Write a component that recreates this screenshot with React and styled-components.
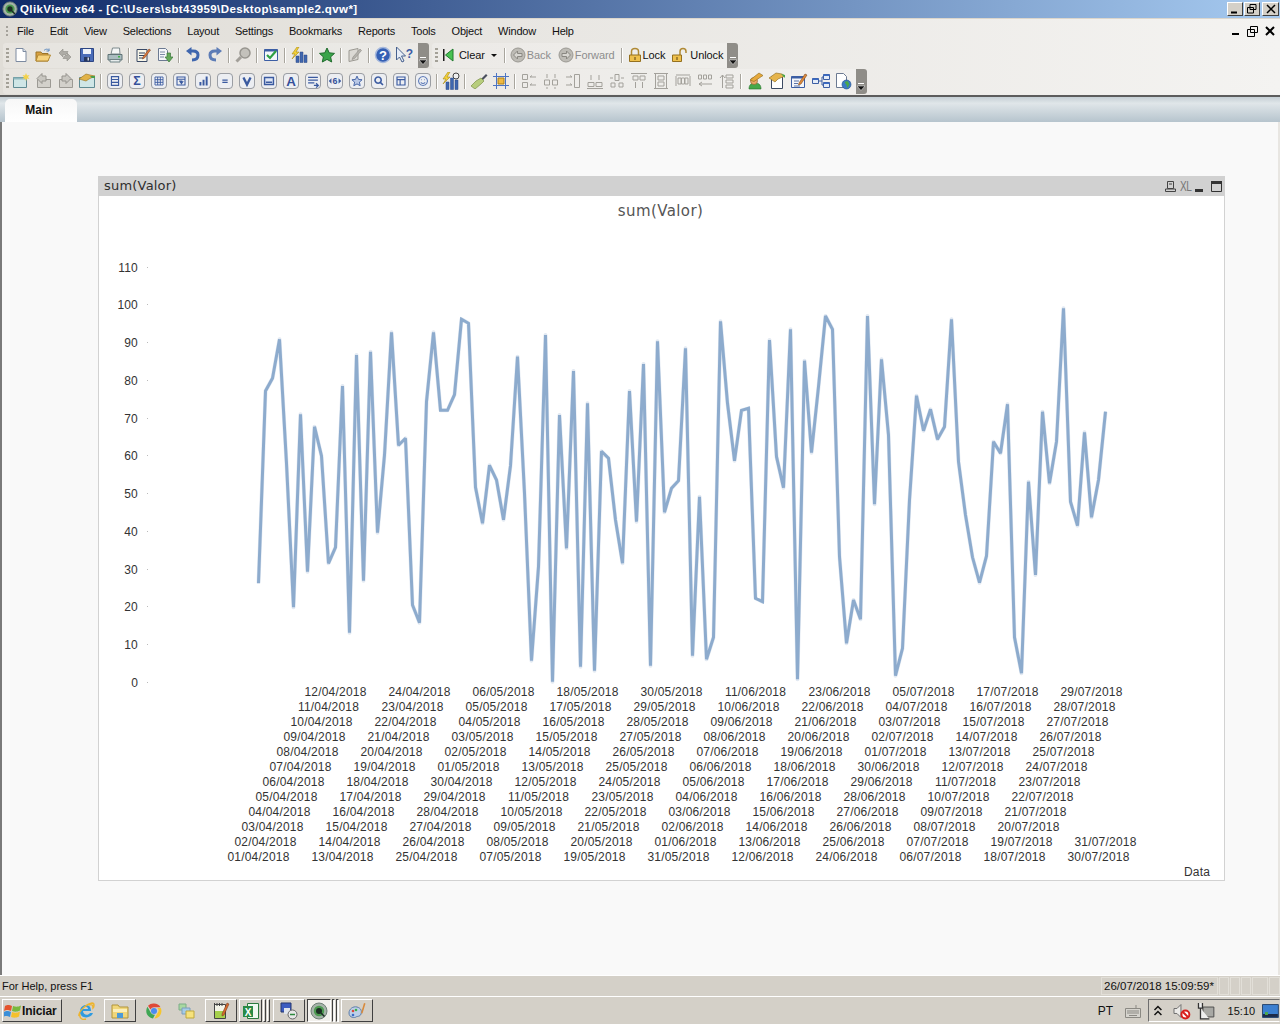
import React from "react";
import styled, { createGlobalStyle } from "styled-components";

const GlobalStyle = createGlobalStyle`
  html, body { margin: 0; padding: 0; background: #f9f9f9; }
  body { font-family: "Liberation Sans", Arial, sans-serif; font-size: 11px; color: #111; overflow: hidden; }
  * { box-sizing: border-box; }
`;

const Page = styled.div`
  width: 1280px;
  height: 1024px;
  display: flex;
  flex-direction: column;
  overflow: hidden;
`;

const Spacer = styled.span`
  flex: none;
  width: ${(p) => p.$w}px;
`;

/* window title */
const TitleBar = styled.div`
  height: 18px;
  display: flex;
  align-items: center;
  padding: 0 1px 0 2px;
  background: linear-gradient(90deg, #0f2a68 0%, #a6caf0 100%);
  color: #fff;
  font-weight: bold;
  font-size: 11.5px;
`;
const TitleText = styled.span`
  margin-left: 2px;
  flex: 1;
  letter-spacing: 0.4px;
`;
const WinButton = styled.button`
  width: ${(p) => p.$w || 16}px;
  height: 14px;
  margin-left: ${(p) => p.$left || 1}px;
  padding: 0;
  display: flex;
  align-items: center;
  justify-content: center;
  background: #d4d0c8;
  border: 1px solid;
  border-color: #fff #404040 #404040 #fff;
`;

/* menu + toolbars share the same gradient backdrop */
const Chrome = styled.div`
  background: linear-gradient(90deg, #e0ddd7 0%, #e8e6e2 40%, #f4f3f1 100%);
  border-top: 1px solid #dcd6cc;
  border-bottom: 2px solid #5c5c5c;
  padding-bottom: 1px;
`;
const MenuBar = styled.div`
  height: 23px;
  display: flex;
  align-items: center;
  padding: 1px 0 0 6px;
`;
const MenuGrip = styled.span`
  width: 2px;
  height: 11px;
  margin-right: 1px;
  background: repeating-linear-gradient(180deg, #a5a29b 0 2px, transparent 2px 4px);
`;
const MenuItem = styled.span`
  padding: 0 8px;
  font-size: 11px;
  letter-spacing: -0.22px;
  color: #111;
`;
const MdiControls = styled.div`
  margin-left: auto;
  display: flex;
  align-items: center;
  gap: 7px;
  padding-right: 5px;
`;
const ToolRow = styled.div`
  height: 26px;
  display: flex;
  align-items: center;
  padding-left: 3px;
`;
const ToolBand = styled.div`
  height: 25px;
  display: flex;
  align-items: center;
  padding-left: 3px;
  margin-left: ${(p) => p.$gap || 0}px;
  border-radius: 3px 0 0 3px;
  background: rgba(255, 255, 255, 0.22);
`;
const Grip = styled.span`
  width: 3px;
  height: 15px;
  margin-right: 0.5px;
  background: repeating-linear-gradient(180deg, #a3a097 0 2px, transparent 2px 4px);
`;
const ToolBtn = styled.span`
  width: ${(p) => p.$w || 22}px;
  height: 22px;
  display: flex;
  align-items: center;
  justify-content: center;
`;
const Sep = styled.span`
  width: 1px;
  height: 15px;
  margin: 0 ${(p) => p.$right ?? 2.5}px 0 ${(p) => p.$left ?? 2.5}px;
  background: #a8a59d;
  box-shadow: 1px 0 0 #fff;
`;
const Chevron = styled.span`
  width: 11px;
  height: 25px;
  display: flex;
  align-items: flex-end;
  justify-content: center;
  padding-bottom: 3px;
  border-radius: 0 3px 3px 0;
  background: #8f8d88;
`;
const TextBtn = styled.span`
  display: flex;
  align-items: center;
  gap: 1px;
  margin-left: ${(p) => p.$left || 0}px;
  font-size: 11px;
  letter-spacing: -0.1px;
  color: ${(p) => (p.$off ? "#8d8d8d" : "#111")};
`;

/* sheet tabs */
const TabStrip = styled.div`
  height: 25px;
  padding: 2px 0 0 5px;
  background: linear-gradient(180deg, #c5cfd5 0%, #e0e6e9 25%, #b6c4cd 100%);
`;
const Tab = styled.div`
  width: 72px;
  height: 23px;
  padding: 4px 4px 0 0;
  text-align: center;
  font-weight: bold;
  font-size: 12px;
  color: #111;
  background: linear-gradient(180deg, #f7f7f7, #fff);
  border-radius: 5px 5px 0 0;
`;

/* sheet area */
const Workspace = styled.div`
  flex: 1;
  padding-top: 54px;
  background: #f9f9f9;
  border-left: 2px solid #7a7a7a;
  border-right: 2px solid #e8e6e2;
`;
const ChartBox = styled.div`
  width: 1127px;
  height: 705px;
  margin-left: 96px;
  display: flex;
  flex-direction: column;
  background: #fff;
  border: 1px solid #d2d2d2;
  border-top: 0;
`;
const Caption = styled.div`
  height: 20px;
  margin: 0 -1px;
  display: flex;
  align-items: center;
  padding: 0 3px 2px 6px;
  background: #d1d1d1;
  color: #2e2e2e;
  font-family: "DejaVu Sans", sans-serif;
  font-size: 13px;
  letter-spacing: 0.2px;
`;
const CaptionTitle = styled.span`
  flex: 1;
`;
const CaptionIcons = styled.div`
  display: flex;
  align-items: center;
  gap: 4px;
  margin-top: 2px;
`;
const XlMark = styled.span`
  width: 11px;
  font-family: "Liberation Sans", sans-serif;
  font-size: 14px;
  color: #777;
  letter-spacing: -0.5px;
  transform: scaleX(0.72);
  transform-origin: left center;
`;
const MaxSlot = styled.span`
  display: flex;
  margin-left: 4px;
`;
const ChartSvg = styled.svg`
  display: block;
  width: 1125px;
  height: 684px;
  text {
    font-family: "Liberation Sans", Arial, sans-serif;
    font-size: 12px;
    fill: #333;
    letter-spacing: 0.2px;
  }
  .title {
    font-family: "DejaVu Sans", sans-serif;
    font-size: 15px;
    fill: #555;
    letter-spacing: 0.4px;
  }
`;

/* status bar */
const StatusBar = styled.div`
  height: 21px;
  display: flex;
  align-items: center;
  padding-left: 2px;
  background: #d4d0c8;
  border-top: 1px solid #fff;
  font-size: 11px;
`;
const StatusCell = styled.div`
  width: ${(p) => p.$w}px;
  height: 18px;
  margin-left: ${(p) => p.$left ?? 1}px;
  padding-left: 2px;
  line-height: 17px;
  border: 1px solid #e2dfd8;
  font-size: 11.5px;
  white-space: nowrap;
`;
const StatusText = styled.span`
  flex: 1;
`;

/* windows taskbar */
const TaskBar = styled.div`
  height: 28px;
  display: flex;
  align-items: center;
  padding-left: 2px;
  background: #d4d0c8;
  border-top: 1px solid #fff;
`;
const StartBtn = styled.div`
  width: 60px;
  height: 23px;
  margin-right: 12px;
  display: flex;
  align-items: center;
  padding-left: 1px;
  font-weight: bold;
  font-size: 12px;
  letter-spacing: -0.1px;
  border: 1px solid;
  border-color: #fff #404040 #404040 #fff;
`;
const TaskBtn = styled.div`
  width: ${(p) => p.$w || 32}px;
  height: 23px;
  margin-left: ${(p) => p.$left ?? 2}px;
  display: flex;
  align-items: center;
  justify-content: center;
  border: 1px solid;
  border-color: ${(p) => (p.$down ? "#404040 #fff #fff #404040" : "#fff #404040 #404040 #fff")};
  background: ${(p) => (p.$down ? "#f2f0ec" : "transparent")};
`;
const TaskPlain = styled.div`
  width: 24px;
  margin-left: ${(p) => p.$left || 0}px;
  display: flex;
  justify-content: center;
`;
const Lang = styled.span`
  margin-left: auto;
  font-size: 12px;
`;
const KbdSlot = styled.span`
  margin: 0 6px 0 11px;
  display: flex;
`;
const Tray = styled.div`
  width: 132px;
  height: 23px;
  display: flex;
  align-items: center;
  padding-left: 4px;
  border: 1px solid;
  border-color: #6e6e6e transparent #fff #6e6e6e;
  font-size: 11px;
`;
const Clock = styled.span`
  margin: 0 7px 0 13px;
`;

const Ico = ({ children, w = 16, h = 16 }) => (
  <svg width={w} height={h} viewBox={`0 0 ${w} ${h}`}>
    {children}
  </svg>
);

/* toolbar 1 */
const NewDoc = () => (
  <Ico>
    <path d="M3 1.5h7l3 3v10H3z" fill="#fff" stroke="#7c8aa0" />
    <path d="M10 1.5v3h3" fill="#dfe6ee" stroke="#7c8aa0" />
  </Ico>
);
const OpenFolder = () => (
  <Ico>
    <path d="M1 5h5l1 1.5h6V14H1z" fill="#d9a040" stroke="#9a7428" />
    <path d="M3 8h12.500l-2.500 6H1z" fill="#f6d27c" stroke="#b48a34" />
    <path d="M9 3.500c2-2 4-1.500 5 0M14 1.500v2.500h-2.500" fill="none" stroke="#5c8ac0" />
  </Ico>
);
const GrayReload = () => (
  <Ico>
    <path d="M2 6l4-4v2.500h5l-2 3H6V10zM14 10l-4 4v-2.500H6l2-3h2V6z" fill="#aeaca6" stroke="#8f8d87" strokeWidth=".6" />
  </Ico>
);
const Floppy = () => (
  <Ico>
    <path d="M1.500 1.500h13v13h-13z" fill="#4a6cb8" stroke="#2d4684" />
    <path d="M4 2h8v5H4z" fill="#eef2f8" />
    <path d="M5 10h6v4.500H5z" fill="#26375f" />
    <path d="M8.500 10.500h1.500v3H8.500z" fill="#d0d6e2" />
  </Ico>
);
const Printer = () => (
  <Ico>
    <path d="M4 7l1.500-6h7L13 7z" fill="#f4f6f6" stroke="#7d8a8c" />
    <path d="M1 7.500h14v5.500H1z" fill="#a9bcbf" stroke="#5f7376" />
    <path d="M3 12.500h10V15H3z" fill="#e8eded" stroke="#6f8285" />
    <path d="M11 9h2v1.500h-2z" fill="#3fb04a" />
  </Ico>
);
const EditScript = () => (
  <Ico>
    <path d="M2 2.500h10v12H2z" fill="#f8f6e8" stroke="#3a4a66" />
    <path d="M4 6h6M4 8.500h6M4 11h4" stroke="#30405c" />
    <path d="M8 10l6-8 1.500 1-6 8-2 1z" fill="#e07a3a" stroke="#7c3f20" strokeWidth=".6" />
  </Ico>
);
const ReloadDoc = () => (
  <Ico>
    <path d="M1.500 1.500h7l2 2v10h-9z" fill="#f4f6fa" stroke="#6c7a92" />
    <path d="M3 5h5M3 7.500h5M3 10h4" stroke="#7b8aa6" />
    <path d="M10 6h3.500v4H16l-4 5-4-5h2z" fill="#62a85a" stroke="#39773a" strokeWidth=".7" />
  </Ico>
);
const Undo = ({ flip, color = "#3f66ae" }) => (
  <Ico>
    <g transform={flip ? "matrix(-1 0 0 1 16 0)" : undefined}>
      <path d="M7 13c5 0 6-2.500 6-5s-2-4-5-4H5.500" fill="none" stroke={color} strokeWidth="3" />
      <path d="M6.500 0L1 4l5.500 4.500z" fill={color} />
    </g>
  </Ico>
);
const Lens = () => (
  <Ico>
    <circle cx="10" cy="6" r="5" fill="#c3c1bb" stroke="#97958f" strokeWidth="1.500" />
    <path d="M6 10l-4.500 4.500" stroke="#a29f99" strokeWidth="3" />
  </Ico>
);
const CheckWin = () => (
  <Ico>
    <path d="M1.500 2.500h13v11h-13z" fill="#f3f6fb" stroke="#3c5ea4" />
    <path d="M1.500 2.500h13v2h-13z" fill="#3c5ea4" />
    <path d="M4 8l3 3 6-7" fill="none" stroke="#2ea043" strokeWidth="2.200" />
  </Ico>
);
const ChartWizard = () => (
  <Ico w={18}>
    <path d="M7 0L2 7h3L2 12l7-7H6l3-5z" fill="#f2d038" stroke="#a78a18" strokeWidth=".6" />
    <path d="M6 9h3v6.500H6zM10 5h3v10.500h-3zM14 8h3v7.500h-3z" fill="#3f66ae" stroke="#2c4a86" strokeWidth=".5" />
  </Ico>
);
const StarIcon = ({ fill = "#3aa44a", stroke = "#1f6b2c" }) => (
  <Ico>
    <path d="M8 1l2.200 4.800 5.300.6-3.900 3.500 1.100 5.100L8 12.400 3.300 15l1.100-5.100L.5 6.400l5.300-.6z" fill={fill} stroke={stroke} />
  </Ico>
);
const GrayEdit = () => (
  <Ico>
    <path d="M2 3.500l9-2v11l-9 2z" fill="#dbd9d4" stroke="#9b9992" />
    <path d="M6 10l7-8 1.500 1.500-7 8-2.500 1z" fill="#b5b3ad" stroke="#8e8c86" strokeWidth=".6" />
  </Ico>
);
const Help = () => (
  <Ico w={18} h={18}>
    <circle cx="9" cy="9" r="7.500" fill="#3560b4" stroke="#a6b9dd" strokeWidth="1.500" />
    <text x="9" y="13.500" textAnchor="middle" fontSize="13" fontWeight="bold" fill="#fff" fontFamily="Liberation Sans">?</text>
  </Ico>
);
const WhatsThis = () => (
  <Ico w={20} h={18}>
    <path d="M1.500 1v13l3-3 2.500 5 2-1-2.500-5h4z" fill="#e6ecf6" stroke="#46608e" />
    <text x="14.500" y="11.500" textAnchor="middle" fontSize="12" fontWeight="bold" fill="#3a5ca6" fontFamily="Liberation Sans">?</text>
  </Ico>
);
const ClearIcon = () => (
  <Ico>
    <path d="M3 2h1.500v12H3z" fill="#1c1c1c" />
    <path d="M13 2v12L5.500 8z" fill="#49c253" stroke="#207a2e" />
  </Ico>
);
const CircleArrow = ({ flip }) => (
  <Ico>
    <circle cx="8" cy="8" r="7" fill="#bdbbb5" stroke="#9b9993" />
    <path d={flip ? "M8.500 4l4 4-4 4v-2.500H4v-3h4.500z" : "M7.500 4l-4 4 4 4v-2.500H12v-3H7.500z"} fill="#d8d6d1" stroke="#8a8882" />
  </Ico>
);
const Padlock = ({ open }) => (
  <Ico w={open ? 18 : 14}>
    <path d={open ? "M9 8V4.500c0-4 6-4 6 0V6" : "M3.500 8V4.500c0-4 7-4 7 0V8"} fill="none" stroke="#b08a34" strokeWidth="1.500" />
    <path d={open ? "M1.500 8h9v6.500h-9z" : "M1.500 8h11v6.500h-11z"} fill="#eec04c" stroke="#94701f" />
    <path d={open ? "M5.500 10h1v3h-1z" : "M6.500 10h1v3h-1z"} fill="#5c4310" />
  </Ico>
);

/* toolbar 2 */
const NewSheet = () => (
  <Ico w={18}>
    <path d="M1.500 4.500h13v10h-13z" fill="#cfe6e6" stroke="#5f8b93" />
    <path d="M1.500 4.500h13v2h-13z" fill="#8fb9bf" />
    <path d="M14 0l1 2.500 2.500-.5L16 4l1.500 2-2.500-.5L14 8l-1-2.500-2.500.5L12 4l-1.500-2 2.500.5z" fill="#f4d24a" />
  </Ico>
);
const MoveSheet = ({ flip }) => (
  <Ico w={18}>
    <path d="M3.500 6.500h13v8h-13z" fill="#d3d1cb" stroke="#9c9a94" />
    <path d={flip ? "M6 3h4V.5l5 5-5 5V8H6z" : "M12 3H8V.5l-5 5 5 5V8h4z"} fill="#c9c7c1" stroke="#96948e" />
  </Ico>
);
const SheetProps = () => (
  <Ico w={18}>
    <path d="M1.500 4.500h15v10h-15z" fill="#cfe6e6" stroke="#5f8b93" />
    <path d="M1 6l7-5 4 1 5 1-6 3-3 2z" fill="#e2b348" stroke="#94701f" strokeWidth=".6" />
    <path d="M12 3l5 0v2h-3z" fill="#4aa04a" />
  </Ico>
);
const glyphs = {
  list: <path d="M5 4h8v10H5zM5 7.300h8M5 10.600h8" fill="none" stroke="#3a5aa0" strokeWidth="1.300" />,
  sigma: <text x="9" y="14" textAnchor="middle" fontSize="14" fontWeight="bold" fill="#34509a" fontFamily="Liberation Sans">Σ</text>,
  grid: <path d="M4.500 4.500h9v9h-9zM7.500 4.500v9M10.500 4.500v9M4.500 7.500h9M4.500 10.500h9" fill="none" stroke="#3a5aa0" />,
  combo: <path d="M4.500 4.500h9v9h-9zM4.500 7h9M7 9l3.500 0M8 10l3 0-1.500 2z" fill="none" stroke="#3a5aa0" strokeWidth="1.200" />,
  bars: <path d="M5 10h2.200v4H5zM8.500 7.500h2.200V14H8.500zM12 4h2.200v10H12z" fill="#3a5aa0" />,
  equals: <path d="M6 7.300h6v1.400H6zM6 9.800h6v1.400H6z" fill="#3a5aa0" />,
  check: <path d="M5 5l4 8 4-8" fill="none" stroke="#3a5aa0" strokeWidth="2.600" />,
  input: <path d="M4 5h10v8H4z M5.500 10.500h7" fill="#dfe6f4" stroke="#3a5aa0" strokeWidth="1.600" />,
  letter: <text x="9" y="14.500" textAnchor="middle" fontSize="15" fontWeight="bold" fill="#34509a" fontFamily="Liberation Sans">A</text>,
  lines: <path d="M3.500 5h11M3.500 8h11M3.500 11h7M10 14h4M12.500 11.500l2.500 2.500-2.500 2.500" fill="none" stroke="#3a5aa0" strokeWidth="1.400" />,
  slider: (
    <>
      <path d="M2 9l3-3v6zM16 9l-3-3v6z" fill="#3a5aa0" />
      <text x="9" y="12.500" textAnchor="middle" fontSize="10" fontWeight="bold" fill="#34509a" fontFamily="Liberation Sans">6</text>
    </>
  ),
  star: <path d="M9 3.500l1.700 3.700 4 .4-3 2.700.9 4L9 12.300l-3.600 2 .9-4-3-2.700 4-.4z" fill="#b9c8e6" stroke="#3a5aa0" />,
  lens: <path d="M8 4.500a3.500 3.500 0 1 0 .01 0zM10.500 10.500l3 3" fill="none" stroke="#3a5aa0" strokeWidth="1.800" />,
  panel: <path d="M4.500 4.500h9v9h-9zM4.500 7.500h9M8 7.500v6" fill="none" stroke="#3a5aa0" strokeWidth="1.300" />,
  smile: <path d="M9 4a5 5 0 1 0 .01 0zM6.500 10.500c1.500 1.500 3.500 1.500 5 0M7 7.500h.8M10.300 7.500h.8" fill="none" stroke="#5c7ab8" strokeWidth="1.200" />,
};
const RoundBtn = ({ g }) => (
  <svg width="16" height="16" viewBox="0 0 18 18">
    <rect x=".5" y=".5" width="17" height="17" rx="4" fill="#eceef2" stroke="#8c8f96" />
    {glyphs[g]}
  </svg>
);
const WizardClock = () => (
  <Ico w={18} h={18}>
    <path d="M6 0L1 7h3L1 12l7-7H5l3-5z" fill="#f2d038" stroke="#a78a18" strokeWidth=".6" />
    <circle cx="14" cy="4" r="3" fill="#f0f0f0" stroke="#444" />
    <path d="M4 10h3v7.500H4zM8.500 6h3v11.500h-3zM13 8h3v9.500h-3z" fill="#3f66ae" stroke="#2c4a86" strokeWidth=".5" />
  </Ico>
);
const Brush = () => (
  <Ico w={18}>
    <path d="M11 6l5-5 1.500 1.500-5 5z" fill="#4a4f5e" />
    <path d="M11 5l3 3-3 3-6 5-4-3 5-5z" fill="#b7cd7c" stroke="#7d8f4a" strokeWidth=".7" />
  </Ico>
);
const Crop = () => (
  <Ico>
    <path d="M5 5h6v6H5z" fill="#f0b840" stroke="#a77e1c" />
    <path d="M3.500 0v16M12.500 0v16M0 3.500h16M0 12.500h16" stroke="#4c74c4" />
  </Ico>
);
const alignShapes = [
  "M1.500 1.500h5v5h-5zM1.500 9.500h5v5h-5zM9 4h6M9 12h6M9 4l2-1.500M9 12l2-1.500",
  "M1.500 7h5v5h-5zM9.500 7h5v5h-5zM4 1v4M12 1v4M4 14v2M12 14v2",
  "M9.500 1.500h5v13h-5zM1 4h6M1 12h6M7 4L5 2.500M7 12l-2-1.500",
  "M1 9.500h6v4H1zM9 9.500h6v4H9zM4 2v5M12 2v5M0 15.500h16",
  "M6 1.500h4v6H6zM2 10h4v4H2zM10 10h4v4h-4zM1 5h3M12 5h3",
  "M0 .5h16M2 3h5v4H2zM9 3h5v4H9zM4.500 9v6M11.500 9v6",
  "M1 .5h14M1 15.500h14M5 3h6v4H5zM5 9h6v4H5zM2.500 1v14M13.500 1v14",
  "M1 3v10M15 3v10M3 5h3v6H3zM6.500 5h3v6h-3zM10 5h3v6h-3zM1 2h14",
  "M1.500 2h3v4h-3zM6.500 2h3v4h-3zM11.500 2h3v4h-3zM2 11h13M2 11l3-2M2 11l3 2",
  "M7 2h7v3H7zM7 7h7v3H7zM7 12h7v3H7zM3.500 15V2M3.500 2L1 5M3.500 2L6 5",
];
const Align = ({ i }) => (
  <Ico>
    <path d={alignShapes[i]} fill="none" stroke="#a3a19b" />
  </Ico>
);
const Assistant = () => (
  <Ico w={18} h={18}>
    <path d="M3 17c0-4 2-6 6-6s6 2 6 6z" fill="#47a84a" stroke="#24702a" strokeWidth=".6" />
    <circle cx="8" cy="9" r="3.500" fill="#e8a868" stroke="#8c5a28" strokeWidth=".6" />
    <path d="M4 8l9-7 4 2.500-9 6z" fill="#e6a83c" stroke="#8c6a1c" strokeWidth=".6" />
  </Ico>
);
const DocHand = () => (
  <Ico w={18} h={18}>
    <path d="M3.500 4.500h11v12h-11z" fill="#fff" stroke="#3c4a62" />
    <path d="M1 6l7-5 6 1 3 2-7 3-3 3z" fill="#e6b44c" stroke="#8c6a1c" strokeWidth=".6" />
    <path d="M13 2l4 1v3z" fill="#47a84a" />
  </Ico>
);
const FormPencil = () => (
  <Ico w={18}>
    <path d="M1.500 3.500h13v11h-13z" fill="#f4f6fa" stroke="#3c5ea4" />
    <path d="M1.500 3.500h13v2h-13z" fill="#3c5ea4" />
    <path d="M4 8h5M4 10.500h4M4 13h6" stroke="#5c74a8" />
    <path d="M9 10l6-9 2 1-6 9-2.500 1z" fill="#e08a3a" stroke="#7c4a20" strokeWidth=".6" />
  </Ico>
);
const Tree = () => (
  <Ico w={18}>
    <path d="M6 8h4M10 4v8M10 4h2M10 12h2" fill="none" stroke="#3c5ea4" />
    <path d="M.5 5.500h6v5h-6zM11.500 1.500h6v5h-6zM11.500 9.500h6v5h-6z" fill="#e4ecf8" stroke="#3c5ea4" />
    <path d="M.5 5.500h6v1.500h-6zM11.500 1.500h6V3h-6zM11.500 9.500h6V11h-6z" fill="#3c6cc4" />
  </Ico>
);
const WebDoc = () => (
  <Ico w={18} h={18}>
    <path d="M2.500 1.500h7l3 3v11h-10z" fill="#fff" stroke="#6c7a92" />
    <circle cx="12.500" cy="12.500" r="4.500" fill="#3c7ac4" stroke="#1f4e8c" strokeWidth=".6" />
    <path d="M10.500 10l3-1 2 3-2 4-1-3z" fill="#4aa84a" />
  </Ico>
);
const ChevronMark = () => (
  <Ico w={8} h={8}>
    <path d="M1 .5h6" stroke="#fff" />
    <path d="M0 3h8L4 7.500z" fill="#111" stroke="#fff" strokeWidth=".5" />
  </Ico>
);

/* taskbar */
const WinFlag = () => (
  <Ico w={18} h={18}>
    <path d="M1 4c3-1.500 4-1 7 0l-1 5c-3-1-4-1.500-7 0z" fill="#e4532c" />
    <path d="M9 4c3 1 5 1 8-.5l-1 5c-3 1.500-5 1.500-8 .5z" fill="#79b93c" />
    <path d="M0 10c3-1.500 4-1 7 0l-1 5c-3-1-4-1.500-7 0z" fill="#3b8fd8" />
    <path d="M8 10c3 1 5 1 8-.5l-1 5c-3 1.500-5 1.500-8 .5z" fill="#f5c02c" />
  </Ico>
);
const IE = () => (
  <Ico w={18} h={18}>
    <path d="M3 10c0-5 3-7 6-7s5 2 5 6H6c0 4 5 5 7 2h3c-2 6-13 6-13-1zM6 7h5c0-3-5-3-5 0z" fill="#2f9be0" />
    <path d="M2 14C1 10 9 2 15 1c3 0 2 4 1 5 0-3-1-4-4-3M3 12c-1 5 3 6 6 5" fill="none" stroke="#eeb42c" strokeWidth="1.400" />
  </Ico>
);
const Explorer = () => (
  <Ico w={18} h={18}>
    <path d="M1 3h6l1.500 2H17v11H1z" fill="#f0d67a" stroke="#b2953a" />
    <path d="M2 7h14v3H2z" fill="#fbeeb8" />
    <path d="M6 11h6v5H6z" fill="#4c9ad8" />
  </Ico>
);
const Chrome2 = () => (
  <Ico w={18} h={18}>
    <path d="M9 1.500a7.500 7.500 0 0 1 6.500 3.700H9a3.800 3.800 0 0 0-3.500 2.300L3 3.800A7.500 7.500 0 0 1 9 1.500z" fill="#df4a38" />
    <path d="M15.800 6a7.500 7.500 0 0 1-6.400 10.500l3-5.300a3.800 3.800 0 0 0 0-5.200z" fill="#f6c62c" />
    <path d="M2.500 4.800L6 11a3.800 3.800 0 0 0 4 1.700L8 16.400A7.500 7.500 0 0 1 2.500 4.800z" fill="#3fa654" />
    <circle cx="9" cy="9" r="3" fill="#4a8cf0" />
  </Ico>
);
const Stacked = () => (
  <Ico w={18} h={18}>
    <path d="M1 2h7v6H1z" fill="#a8d8a0" stroke="#7cae88" />
    <path d="M4 6h8v6H4z" fill="#a4cce8" stroke="#7c9ebc" />
    <path d="M8 9h8v7H8z" fill="#f6e27c" stroke="#c0a83c" />
  </Ico>
);
const Notepad = () => (
  <Ico w={18} h={18}>
    <path d="M2.500 2.500h11v14h-11z" fill="#f4f4e8" stroke="#444" />
    <path d="M3 9h10v7H3z" fill="#a6d04c" />
    <path d="M2.500 1v3M5 1v3M7.500 1v3M10 1v3" stroke="#444" />
    <path d="M10 12l5-11 2 1-5 11-2 1z" fill="#d86a2c" stroke="#6c3418" strokeWidth=".5" />
  </Ico>
);
const Excel = () => (
  <Ico w={18} h={18}>
    <path d="M5.500 1.500h11v15h-11z" fill="#f0f8f0" stroke="#2c7a3c" />
    <path d="M1 4h10v11H1z" fill="#2a8a44" />
    <text x="6" y="13.500" textAnchor="middle" fontSize="10" fontWeight="bold" fill="#fff" fontFamily="Liberation Sans">X</text>
  </Ico>
);
const Remote = () => (
  <Ico w={18} h={18}>
    <path d="M1 1h10v9H1z" fill="#3c5cc0" stroke="#24366e" />
    <path d="M4 6h6v6H4z" fill="#dfe4ec" />
    <circle cx="12.500" cy="12.500" r="4.500" fill="#e8e8e8" stroke="#666" />
    <path d="M10 12.500h5" stroke="#2c8a3c" strokeWidth="1.500" />
  </Ico>
);
const QlikBall = ({ size = 18 }) => (
  <svg width={size} height={size} viewBox="0 0 18 18">
    <circle cx="9" cy="9" r="8" fill="#a5b3a8" stroke="#6f7f76" />
    <circle cx="9" cy="9" r="5.200" fill="#4c9a50" />
    <circle cx="9" cy="9" r="3" fill="#1c2e24" />
    <path d="M11 11l3.500 3.500" stroke="#1c2e24" strokeWidth="1.600" />
  </svg>
);
const Palette = () => (
  <Ico w={18} h={18}>
    <path d="M1 11c0-4 4-7 8-6s5 4 4 7-4 2-5 3-7 1-7-4z" fill="#bcd0e8" stroke="#5c7ca8" />
    <circle cx="5" cy="9" r="1.300" fill="#d84a3c" />
    <circle cx="8" cy="8" r="1.300" fill="#3cb04c" />
    <circle cx="5" cy="13" r="1.300" fill="#3c6cc4" />
    <path d="M13 11l3-10 1.500.5-3 10z" fill="#d88a3c" />
  </Ico>
);
const Keyboard = () => (
  <Ico w={18} h={18}>
    <path d="M1.500 6.500h15v9h-15z" fill="#d6d4ce" stroke="#8b8983" />
    <path d="M3 9h12M3 11h12M5 13.500h8M12 6V3" stroke="#8b8983" />
  </Ico>
);
const TrayUp = () => (
  <Ico w={10} h={12}>
    <path d="M1.500 5L5 1.500 8.500 5M1.500 10L5 6.500 8.500 10" fill="none" stroke="#111" strokeWidth="1.500" />
  </Ico>
);
const Speaker = () => (
  <Ico w={18} h={18}>
    <path d="M1 6.500h3l4-4v13l-4-4H1z" fill="#ecebe8" stroke="#6e6e6e" />
    <circle cx="12.500" cy="12.500" r="4" fill="#fff" stroke="#d8201c" strokeWidth="2" />
    <path d="M10 10l5 5" stroke="#d8201c" strokeWidth="2" />
  </Ico>
);
const Network = () => (
  <Ico w={18} h={18}>
    <path d="M6 5h11v10H6z" fill="#a8a8a4" stroke="#4e4e4e" />
    <path d="M1.500 1v5h4V1M3.500 6v11h9" fill="#eee" stroke="#333" strokeWidth="1.300" />
  </Ico>
);
const Desktop = () => (
  <Ico w={17} h={14}>
    <path d="M.5.500h16v13H.5z" fill="#3b7fd0" stroke="#28476e" />
    <path d="M1 10h15v3H1z" fill="#1c2a48" />
    <path d="M3 8h3v3H3z" fill="#4aa84a" />
  </Ico>
);

/* values traced from the line, as 3x pixel offsets from y=300 */
const TRACE = [
  850, 273, 235, 118, 490, 922, 343, 815, 380, 468, 790, 742, 258, 998, 165, 842, 155, 698, 465, 97, 436,
  415, 915, 968, 305, 97, 331, 331, 284, 58, 70, 562, 670, 496, 540, 659, 497, 170, 580, 1082, 800, 105,
  1145, 345, 745, 213, 1100, 310, 1112, 454, 475, 660, 790, 273, 665, 192, 1097, 124, 637, 565, 542, 145,
  1067, 590, 1078, 1012, 64, 310, 482, 331, 325, 895, 905, 120, 470, 563, 88, 1138, 182, 458, 260, 48, 88,
  770, 1030, 900, 958, 48, 613, 178, 405, 1127, 1045, 600, 287, 392, 328, 418, 380, 58, 485, 645, 772, 848,
  768, 425, 460, 313, 1012, 1120, 545, 825, 335, 550, 425, 25, 605, 677, 397, 652, 540, 335,
];
const X0 = 258.5;
const STEP = 7;
const points = TRACE.map((t, i) => `${X0 + i * STEP},${(300 + t / 3).toFixed(1)}`).join(" ");

const dateLabel = (i) => {
  const d = new Date(Date.UTC(2018, 3, 1 + i));
  const dd = String(d.getUTCDate()).padStart(2, "0");
  const mm = String(d.getUTCMonth() + 1).padStart(2, "0");
  return `${dd}/${mm}/2018`;
};

const Chart = () => (
  <ChartSvg viewBox="99 196 1125 684">
    <text className="title" x="660.500" y="216" textAnchor="middle">sum(Valor)</text>
    {Array.from({ length: 12 }, (_, n) => {
      const y = Math.round(682 - n * 37.73 - 0.3);
      return (
        <g key={n}>
          <text x="138" y={y + 5} textAnchor="end">{n * 10}</text>
          <rect x="147" y={y} width="1" height="1" fill="#bbb" />
        </g>
      );
    })}
    <polyline points={points} fill="none" stroke="#e2e9f2" strokeWidth="4" strokeLinejoin="round" />
    <polyline points={points} fill="none" stroke="#8dabcd" strokeWidth="3" strokeLinejoin="miter" strokeMiterlimit="2" />
    {TRACE.map((_, i) => (
      <text key={i} x={X0 + i * STEP} y={860.5 - (i % 12) * 15} textAnchor="middle">{dateLabel(i)}</text>
    ))}
    <text x="1184" y="875.500">Data</text>
  </ChartSvg>
);

const MENU = ["File", "Edit", "View", "Selections", "Layout", "Settings", "Bookmarks", "Reports", "Tools", "Object", "Window", "Help"];
const ROUND = ["list", "sigma", "grid", "combo", "bars", "equals", "check", "input", "letter", "lines", "slider", "star", "lens", "panel", "smile"];

const App = () => (
  <Page>
    <GlobalStyle />
    <TitleBar>
      <QlikBall size={16} />
      <TitleText>QlikView x64 - [C:\Users\sbt43959\Desktop\sample2.qvw*]</TitleText>
      <WinButton>
        <Ico w={10} h={10}><path d="M1 7.500h6v2H1z" fill="#000" /></Ico>
      </WinButton>
      <WinButton>
        <Ico w={10} h={10}><path d="M3 .5h6v5H3zM.5 3.500h6v5.500h-6z" fill="#d4d0c8" stroke="#000" /></Ico>
      </WinButton>
      <WinButton $w={17} $left={2}>
        <Ico w={10} h={10}><path d="M1 1l8 8M9 1L1 9" stroke="#000" strokeWidth="1.500" /></Ico>
      </WinButton>
    </TitleBar>
    <Chrome>
      <MenuBar>
        <MenuGrip />
        {MENU.map((m) => <MenuItem key={m}>{m}</MenuItem>)}
        <MdiControls>
          <Ico w={8} h={10}><path d="M0 7h7v2H0z" fill="#000" /></Ico>
          <Ico w={11} h={11}><path d="M3.500 .5h7v6h-7zM.5 3.500h7v7h-7z" fill="#f3f2f0" stroke="#000" /></Ico>
          <Ico w={10} h={10}><path d="M1 1l8 8M9 1L1 9" stroke="#000" strokeWidth="2" /></Ico>
        </MdiControls>
      </MenuBar>
      <ToolRow>
        <ToolBand>
          <Grip />
          <ToolBtn><NewDoc /></ToolBtn>
          <ToolBtn><OpenFolder /></ToolBtn>
          <ToolBtn><GrayReload /></ToolBtn>
          <ToolBtn><Floppy /></ToolBtn>
          <Sep />
          <ToolBtn><Printer /></ToolBtn>
          <Sep />
          <ToolBtn><EditScript /></ToolBtn>
          <ToolBtn><ReloadDoc /></ToolBtn>
          <Sep />
          <ToolBtn><Undo /></ToolBtn>
          <ToolBtn><Undo flip color="#5d7cb6" /></ToolBtn>
          <Sep />
          <ToolBtn><Lens /></ToolBtn>
          <Sep />
          <ToolBtn><CheckWin /></ToolBtn>
          <Sep />
          <ToolBtn><ChartWizard /></ToolBtn>
          <Sep />
          <ToolBtn><StarIcon /></ToolBtn>
          <Sep />
          <ToolBtn><GrayEdit /></ToolBtn>
          <Sep />
          <ToolBtn><Help /></ToolBtn>
          <ToolBtn><WhatsThis /></ToolBtn>
          <Spacer $w={2} />
        </ToolBand>
        <Chevron><ChevronMark /></Chevron>
        <ToolBand $gap={3}>
          <Grip />
          <ToolBtn $w={20}><ClearIcon /></ToolBtn>
          <TextBtn $left={1}>Clear</TextBtn>
          <TextBtn $left={5}>
            <Ico w={8} h={8}><path d="M1 3h6L4 6z" fill="#111" /></Ico>
          </TextBtn>
          <Sep $left={6} $right={5} />
          <TextBtn $off><CircleArrow /> Back</TextBtn>
          <TextBtn $off $left={7}><CircleArrow flip /> Forward</TextBtn>
          <Sep $left={6} $right={6} />
          <TextBtn><Padlock /> Lock</TextBtn>
          <TextBtn $left={6}><Padlock open />Unlock</TextBtn>
          <Spacer $w={4} />
        </ToolBand>
        <Chevron><ChevronMark /></Chevron>
      </ToolRow>
      <ToolRow>
        <ToolBand>
          <Grip />
          <ToolBtn><NewSheet /></ToolBtn>
          <ToolBtn><MoveSheet /></ToolBtn>
          <ToolBtn><MoveSheet flip /></ToolBtn>
          <ToolBtn><SheetProps /></ToolBtn>
          <Sep />
          {ROUND.map((g) => <ToolBtn key={g}><RoundBtn g={g} /></ToolBtn>)}
          <Sep />
          <ToolBtn><WizardClock /></ToolBtn>
          <Sep />
          <ToolBtn><Brush /></ToolBtn>
          <ToolBtn><Crop /></ToolBtn>
          <Sep />
          {alignShapes.map((_, i) => <ToolBtn key={i}><Align i={i} /></ToolBtn>)}
          <Sep />
          <ToolBtn><Assistant /></ToolBtn>
          <ToolBtn><DocHand /></ToolBtn>
          <ToolBtn><FormPencil /></ToolBtn>
          <ToolBtn><Tree /></ToolBtn>
          <ToolBtn><WebDoc /></ToolBtn>
          <Spacer $w={2} />
        </ToolBand>
        <Chevron><ChevronMark /></Chevron>
      </ToolRow>
    </Chrome>
    <TabStrip>
      <Tab>Main</Tab>
    </TabStrip>
    <Workspace>
      <ChartBox>
        <Caption>
          <CaptionTitle>sum(Valor)</CaptionTitle>
          <CaptionIcons>
            <Ico w={11} h={11}>
              <path d="M2.500 .5h6v7h-6zM.5 8h10v2.500H.5zM4 3h3" fill="none" stroke="#444" />
            </Ico>
            <XlMark>XL</XlMark>
            <Ico w={8} h={11}><path d="M0 8h8v3H0z" fill="#333" /></Ico>
            <MaxSlot>
              <Ico w={11} h={11}>
                <path d="M.5 .5h10v10H.5z" fill="none" stroke="#333" />
                <path d="M0 0h11v3H0z" fill="#333" />
              </Ico>
            </MaxSlot>
          </CaptionIcons>
        </Caption>
        <Chart />
      </ChartBox>
    </Workspace>
    <StatusBar>
      <StatusText>For Help, press F1</StatusText>
      <StatusCell $w={117}>26/07/2018 15:09:59*</StatusCell>
      <StatusCell $w={10} />
      <StatusCell $w={10} />
      <StatusCell $w={10} />
      <StatusCell $w={16} />
      <StatusCell $w={11} />
    </StatusBar>
    <TaskBar>
      <StartBtn><WinFlag />Iniciar</StartBtn>
      <TaskPlain><IE /></TaskPlain>
      <TaskBtn $left={6}><Explorer /></TaskBtn>
      <TaskPlain $left={6}><Chrome2 /></TaskPlain>
      <TaskPlain $left={9}><Stacked /></TaskPlain>
      <TaskBtn $left={6}><Notepad /></TaskBtn>
      <TaskBtn $w={23}><Excel /></TaskBtn>
      <TaskBtn $w={3} $left={1} />
      <TaskBtn $w={3} $left={1} />
      <TaskBtn $left={3}><Remote /></TaskBtn>
      <TaskBtn $w={24} $down><QlikBall /></TaskBtn>
      <TaskBtn $w={3} $left={1} $down />
      <TaskBtn $w={3} $left={1} $down />
      <TaskBtn><Palette /></TaskBtn>
      <Lang>PT</Lang>
      <KbdSlot><Keyboard /></KbdSlot>
      <Tray>
        <TrayUp />
        <Spacer $w={10} />
        <Speaker />
        <Spacer $w={6} />
        <Network />
        <Clock>15:10</Clock>
        <Desktop />
      </Tray>
    </TaskBar>
  </Page>
);

export default App;
